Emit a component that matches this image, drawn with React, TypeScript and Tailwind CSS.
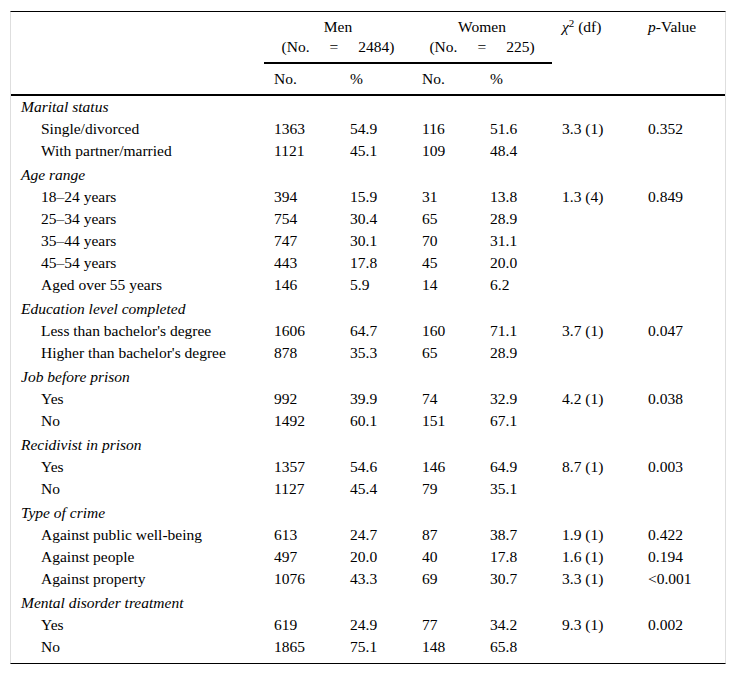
type Row = {
  label: string
  menNo: string
  menPct: string
  womenNo: string
  womenPct: string
  chi?: string
  p?: string
}

type Group = { title: string; rows: Row[] }

const groups: Group[] = [
  {
    title: "Marital status",
    rows: [
      { label: "Single/divorced", menNo: "1363", menPct: "54.9", womenNo: "116", womenPct: "51.6", chi: "3.3 (1)", p: "0.352" },
      { label: "With partner/married", menNo: "1121", menPct: "45.1", womenNo: "109", womenPct: "48.4" },
    ],
  },
  {
    title: "Age range",
    rows: [
      { label: "18–24 years", menNo: "394", menPct: "15.9", womenNo: "31", womenPct: "13.8", chi: "1.3 (4)", p: "0.849" },
      { label: "25–34 years", menNo: "754", menPct: "30.4", womenNo: "65", womenPct: "28.9" },
      { label: "35–44 years", menNo: "747", menPct: "30.1", womenNo: "70", womenPct: "31.1" },
      { label: "45–54 years", menNo: "443", menPct: "17.8", womenNo: "45", womenPct: "20.0" },
      { label: "Aged over 55 years", menNo: "146", menPct: "5.9", womenNo: "14", womenPct: "6.2" },
    ],
  },
  {
    title: "Education level completed",
    rows: [
      { label: "Less than bachelor's degree", menNo: "1606", menPct: "64.7", womenNo: "160", womenPct: "71.1", chi: "3.7 (1)", p: "0.047" },
      { label: "Higher than bachelor's degree", menNo: "878", menPct: "35.3", womenNo: "65", womenPct: "28.9" },
    ],
  },
  {
    title: "Job before prison",
    rows: [
      { label: "Yes", menNo: "992", menPct: "39.9", womenNo: "74", womenPct: "32.9", chi: "4.2 (1)", p: "0.038" },
      { label: "No", menNo: "1492", menPct: "60.1", womenNo: "151", womenPct: "67.1" },
    ],
  },
  {
    title: "Recidivist in prison",
    rows: [
      { label: "Yes", menNo: "1357", menPct: "54.6", womenNo: "146", womenPct: "64.9", chi: "8.7 (1)", p: "0.003" },
      { label: "No", menNo: "1127", menPct: "45.4", womenNo: "79", womenPct: "35.1" },
    ],
  },
  {
    title: "Type of crime",
    rows: [
      { label: "Against public well-being", menNo: "613", menPct: "24.7", womenNo: "87", womenPct: "38.7", chi: "1.9 (1)", p: "0.422" },
      { label: "Against people", menNo: "497", menPct: "20.0", womenNo: "40", womenPct: "17.8", chi: "1.6 (1)", p: "0.194" },
      { label: "Against property", menNo: "1076", menPct: "43.3", womenNo: "69", womenPct: "30.7", chi: "3.3 (1)", p: "<0.001" },
    ],
  },
  {
    title: "Mental disorder treatment",
    rows: [
      { label: "Yes", menNo: "619", menPct: "24.9", womenNo: "77", womenPct: "34.2", chi: "9.3 (1)", p: "0.002" },
      { label: "No", menNo: "1865", menPct: "75.1", womenNo: "148", womenPct: "65.8" },
    ],
  },
]

const cols = "grid grid-cols-[253px_76px_72px_68px_72px_86px_89px]"

export default function App() {
  return (
    <div className="min-h-[675px] bg-white pt-[11px] pl-[10px] font-['Liberation_Serif',serif] text-[15.5px] text-black">
      <div className="w-[716px] border border-x-[#dedede] border-y-black">
        {/* header */}
        <div className={`${cols} border-b-2 border-black`}>
          <div className="row-span-2" />
          <div className="col-span-2 border-b-2 border-black pt-[5px] pb-[5px] text-center leading-[20px]">
            <div>Men</div>
            <div>
              (No.<span className="mx-[20px]">=</span>2484)
            </div>
          </div>
          <div className="col-span-2 border-b-2 border-black pt-[5px] pb-[5px] text-center leading-[20px]">
            <div>Women</div>
            <div>
              (No.<span className="mx-[20px]">=</span>225)
            </div>
          </div>
          <div className="row-span-2 pl-[10px] pt-[5px] leading-[20px]">
            <i>χ</i>
            <sup className="text-[11px]">2</sup> (df)
          </div>
          <div className="row-span-2 pl-[10px] pt-[5px] leading-[20px]">
            <i>p</i>-Value
          </div>
          <div className="h-[30px] pl-[10px] pt-[5px] leading-[20px]">No.</div>
          <div className="h-[30px] pl-[10px] pt-[5px] leading-[20px]">%</div>
          <div className="h-[30px] pl-[10px] pt-[5px] leading-[20px]">No.</div>
          <div className="h-[30px] pl-[10px] pt-[5px] leading-[20px]">%</div>
        </div>

        {/* body */}
        <div className="pb-[5px] leading-[22px]">
          {groups.map((g, gi) => (
            <div key={g.title}>
              <div className={`${gi > 0 ? "pt-[2px]" : ""} pl-[10px] italic`}>{g.title}</div>
              {g.rows.map((r) => (
                <div key={r.label} className={cols}>
                  <div className="pl-[30px]">{r.label}</div>
                  <div className="pl-[10px]">{r.menNo}</div>
                  <div className="pl-[10px]">{r.menPct}</div>
                  <div className="pl-[10px]">{r.womenNo}</div>
                  <div className="pl-[10px]">{r.womenPct}</div>
                  <div className="pl-[10px]">{r.chi}</div>
                  <div className="pl-[10px]">{r.p}</div>
                </div>
              ))}
            </div>
          ))}
        </div>
      </div>
    </div>
  )
}
